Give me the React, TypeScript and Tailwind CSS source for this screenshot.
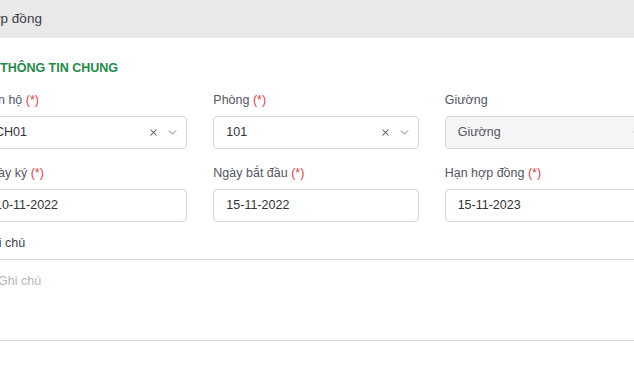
import { X, ChevronDown } from 'lucide-react';

const font = { fontFamily: '"Liberation Sans", Arial, sans-serif' };

function Label({ text, required }: { text: string; required?: boolean }) {
  return (
    <div className="mb-[8px] h-[16px] text-[12.5px] leading-[16px] text-[#55555f]">
      {text}
      {required && <span className="text-[#e53e3e]"> (*)</span>}
    </div>
  );
}

function SelectBox({ value, disabled }: { value: string; disabled?: boolean }) {
  return (
    <div
      className={`flex h-[33px] items-center rounded-[4px] border border-[#d6d6dc] pl-[12px] pr-[7px] text-[12.5px] ${
        disabled ? 'bg-[#f5f5f6] text-[#55555f]' : 'bg-white text-[#333]'
      }`}
    >
      <span className="flex-1">{value}</span>
      {!disabled && <X className="mr-[7px] h-[11px] w-[11px] text-[#555]" strokeWidth={2.2} />}
      <ChevronDown className={`h-[13px] w-[13px] ${disabled ? 'text-[#d4d4d8]' : 'text-[#777]'}`} strokeWidth={1.8} />
    </div>
  );
}

function DateBox({ value }: { value: string }) {
  return (
    <div className="flex h-[33px] items-center rounded-[4px] border border-[#d6d6dc] bg-white px-[12px] text-[12.5px] text-[#333]">
      {value}
    </div>
  );
}

export default function App() {
  return (
    <div className="h-[383px] w-[634px] overflow-hidden bg-white" style={font}>
      <div className="-ml-[18px] w-[668px]">
        <div className="flex h-[38px] items-center bg-[#e9e9ea] text-[13.5px] text-[#3c3c48]">Hợp đồng</div>

        <div className="pt-[22px]">
          <div className="mb-[16px] pl-[18px] text-[12.5px] font-bold leading-[16px] text-[#1f8a4a]">THÔNG TIN CHUNG</div>

          <div className="grid grid-cols-3 gap-x-[26px] gap-y-[16px]">
            <div>
              <Label text="Căn hộ" required />
              <SelectBox value="CH01" />
            </div>
            <div>
              <Label text="Phòng" required />
              <SelectBox value="101" />
            </div>
            <div>
              <Label text="Giường" />
              <SelectBox value="Giường" disabled />
            </div>
            <div>
              <Label text="Ngày ký" required />
              <DateBox value="10-11-2022" />
            </div>
            <div>
              <Label text="Ngày bắt đầu" required />
              <DateBox value="15-11-2022" />
            </div>
            <div>
              <Label text="Hạn hợp đồng" required />
              <DateBox value="15-11-2023" />
            </div>
          </div>

          <div className="mt-[13px]">
            <div className="mb-[8px] h-[16px] text-[12.5px] leading-[16px] text-[#44444c]">Ghi chú</div>
            <textarea
              placeholder="Ghi chú"
              className="block h-[82px] w-full resize-none rounded-[4px] border border-[#d6d6dc] px-[15px] py-[12px] text-[12.5px] text-[#333] outline-none placeholder:text-[#b5b5bb]"
              style={font}
            />
          </div>
        </div>
      </div>
    </div>
  );
}
